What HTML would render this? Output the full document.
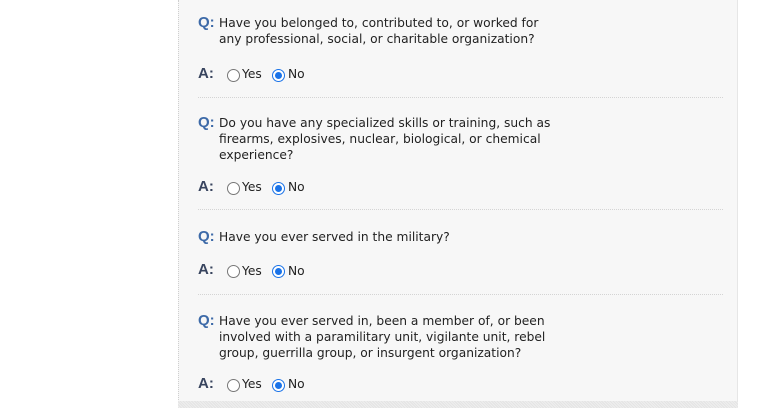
<!DOCTYPE html>
<html><head><style>
*{margin:0;padding:0;box-sizing:border-box}
body{width:761px;height:408px;background:#fff;position:relative;overflow:hidden;font-family:"DejaVu Sans","Liberation Sans",sans-serif;}
.panel{position:absolute;left:178px;top:0;width:560px;height:408px;background:#f7f7f7;border-left:1px dotted #cfcfcf;border-right:1px solid #e6e6e6}
.bot{position:absolute;left:178px;top:401px;width:560px;height:7px;background:repeating-linear-gradient(45deg,#e4e4e4 0 1px,#eeeeee 1px 2px)}
.q{position:absolute;left:198px;font-weight:bold;color:#3d6aa8;font-size:15px;font-family:"Liberation Sans",sans-serif}
.qt{position:absolute;left:219px;font-size:12.25px;color:#222;line-height:16px;white-space:nowrap}
.a{position:absolute;left:198px;font-weight:bold;color:#38445e;font-size:15px;font-family:"Liberation Sans",sans-serif}
.r{position:absolute;width:13px;height:13px;border-radius:50%;border:1px solid #777;background:#fff}
.r.on{border:1px solid #1a73e8;}
.r.on::after{content:"";position:absolute;left:2px;top:2px;width:7px;height:7px;border-radius:50%;background:#1a73e8}
.lb{position:absolute;font-size:12.25px;color:#222}
.sep{position:absolute;left:198px;width:525px;border-top:1px dotted #d4d4d4}
</style></head><body>
<div class="panel"></div>
<div class="bot"></div>

<div class="q" style="top:14px">Q:</div>
<div class="qt" style="top:15px">Have you belonged to, contributed to, or worked for<br>any professional, social, or charitable organization?</div>
<div class="a" style="top:65px">A:</div>
<div class="r" style="left:227px;top:69px"></div><div class="lb" style="left:242px;top:67px">Yes</div>
<div class="r on" style="left:272px;top:69px"></div><div class="lb" style="left:288px;top:67px">No</div>
<div class="sep" style="top:97px"></div>

<div class="q" style="top:114px">Q:</div>
<div class="qt" style="top:115px">Do you have any specialized skills or training, such as<br>firearms, explosives, nuclear, biological, or chemical<br>experience?</div>
<div class="a" style="top:178px">A:</div>
<div class="r" style="left:227px;top:182px"></div><div class="lb" style="left:242px;top:180px">Yes</div>
<div class="r on" style="left:272px;top:182px"></div><div class="lb" style="left:288px;top:180px">No</div>
<div class="sep" style="top:209px"></div>

<div class="q" style="top:228px">Q:</div>
<div class="qt" style="top:229px">Have you ever served in the military?</div>
<div class="a" style="top:261px">A:</div>
<div class="r" style="left:227px;top:265px"></div><div class="lb" style="left:242px;top:264px">Yes</div>
<div class="r on" style="left:272px;top:265px"></div><div class="lb" style="left:288px;top:264px">No</div>
<div class="sep" style="top:294px"></div>

<div class="q" style="top:312px">Q:</div>
<div class="qt" style="top:313px">Have you ever served in, been a member of, or been<br>involved with a paramilitary unit, vigilante unit, rebel<br>group, guerrilla group, or insurgent organization?</div>
<div class="a" style="top:375px">A:</div>
<div class="r" style="left:227px;top:379px"></div><div class="lb" style="left:242px;top:377px">Yes</div>
<div class="r on" style="left:272px;top:379px"></div><div class="lb" style="left:288px;top:377px">No</div>
</body></html>
